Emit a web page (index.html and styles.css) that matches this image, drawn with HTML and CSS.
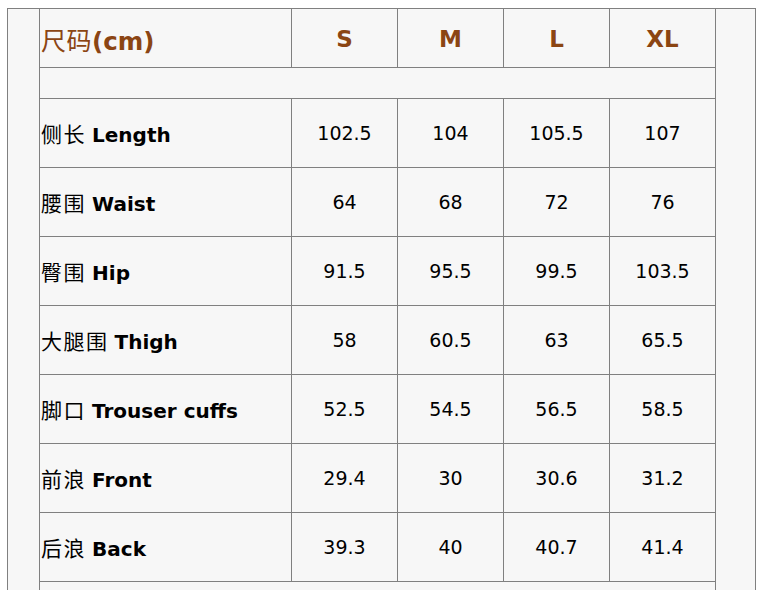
FILE: index.html
```html
<!DOCTYPE html>
<html lang="zh">
<head>
<meta charset="utf-8">
<link rel="stylesheet" href="styles.css">
</head>
<body>
<div class="frame">
  <table class="size-table">
    <colgroup>
      <col class="c-label">
      <col class="c-size">
      <col class="c-size">
      <col class="c-size">
      <col class="c-size">
    </colgroup>
    <tr class="head">
      <td class="label"><span class="cjk">尺码</span><b>(cm)</b></td>
      <td>S</td>
      <td>M</td>
      <td>L</td>
      <td>XL</td>
    </tr>
    <tr class="spacer"><td colspan="5"></td></tr>
    <tr class="row">
      <td class="label"><span class="cjk">侧长</span> <b>Length</b></td>
      <td>102.5</td><td>104</td><td>105.5</td><td>107</td>
    </tr>
    <tr class="row">
      <td class="label"><span class="cjk">腰围</span> <b>Waist</b></td>
      <td>64</td><td>68</td><td>72</td><td>76</td>
    </tr>
    <tr class="row">
      <td class="label"><span class="cjk">臀围</span> <b>Hip</b></td>
      <td>91.5</td><td>95.5</td><td>99.5</td><td>103.5</td>
    </tr>
    <tr class="row">
      <td class="label"><span class="cjk">大腿围</span> <b>Thigh</b></td>
      <td>58</td><td>60.5</td><td>63</td><td>65.5</td>
    </tr>
    <tr class="row">
      <td class="label"><span class="cjk">脚口</span> <b>Trouser cuffs</b></td>
      <td>52.5</td><td>54.5</td><td>56.5</td><td>58.5</td>
    </tr>
    <tr class="row">
      <td class="label"><span class="cjk">前浪</span> <b>Front</b></td>
      <td>29.4</td><td>30</td><td>30.6</td><td>31.2</td>
    </tr>
    <tr class="row">
      <td class="label"><span class="cjk">后浪</span> <b>Back</b></td>
      <td>39.3</td><td>40</td><td>40.7</td><td>41.4</td>
    </tr>
    <tr class="row">
      <td colspan="5"></td>
    </tr>
  </table>
</div>
</body>
</html>
```
FILE: styles.css
```css
html, body {
  margin: 0;
  padding: 0;
  background: #ffffff;
}

body {
  padding: 8px 8px 0 7px;
  overflow: hidden;
  height: 590px;
  box-sizing: border-box;
}

.frame {
  border: 1px solid #808080;
  border-bottom: none;
  background: #f7f7f7;
  padding-left: 31px;
  height: 700px;
}

.size-table {
  border-collapse: collapse;
  table-layout: fixed;
  width: 677px;
  font-family: "DejaVu Sans", Verdana, sans-serif;
  font-size: 19px;
  color: #000;
}

.c-label { width: 252px; }
.c-size { width: 106px; }

.size-table td {
  border: 1px solid #808080;
  text-align: center;
  vertical-align: middle;
  padding: 0;
}

.size-table tr:first-child td {
  border-top: none;
}

.size-table td.label {
  text-align: left;
  padding-left: 1px;
}

.size-table b {
  font-size: 20px;
}

.cjk {
  font-family: "Noto Sans CJK SC", sans-serif;
  font-weight: 400;
  font-size: 21px;
  letter-spacing: 1.5px;
}

.head {
  height: 58px;
}

.head td {
  color: #8b4513;
  font-weight: bold;
  font-size: 23px;
  padding-top: 3px;
}

.head td.label {
  font-weight: normal;
}

.head td.label b {
  font-weight: bold;
  font-size: 24.5px;
}

.head .cjk {
  font-size: 25px;
  letter-spacing: 0.5px;
}

.spacer {
  height: 31px;
}

.row {
  height: 69px;
}
```
